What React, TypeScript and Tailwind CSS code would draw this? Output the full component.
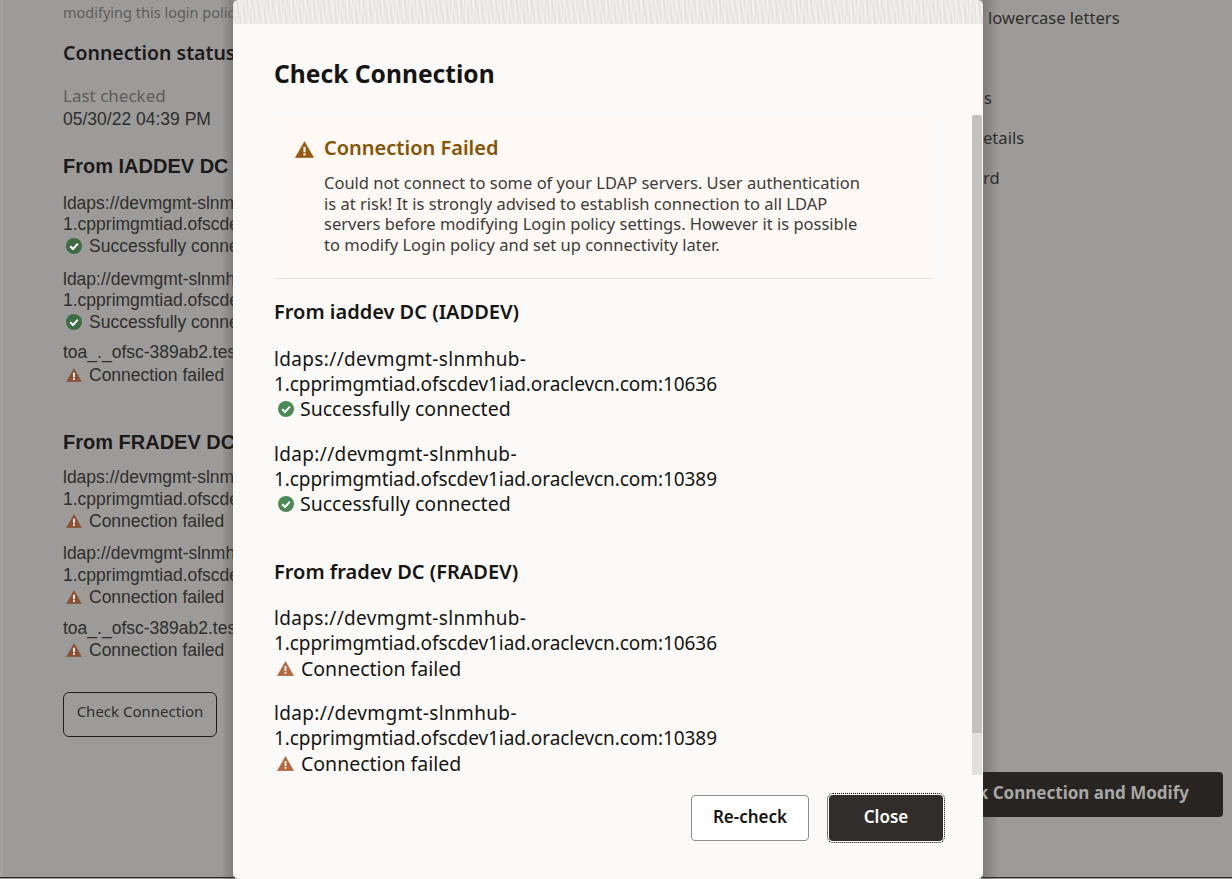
const oracle = "font-['Noto_Sans','Open_Sans',sans-serif]";

function WarnIcon({ className }: { className: string }) {
  return (
    <svg viewBox="0 0 18 16" className={className}>
      <path d="M9 .6 17.6 15.6H.4Z" fill="currentColor" stroke="currentColor" strokeWidth="0.6" strokeLinejoin="round" />
      <rect x="8" y="5.4" width="2" height="5.2" fill="#fff" />
      <rect x="8" y="11.6" width="2" height="2" fill="#fff" />
    </svg>
  );
}

function OkIcon({ className }: { className: string }) {
  return (
    <svg viewBox="0 0 16 16" className={className}>
      <circle cx="8" cy="8" r="8" fill="currentColor" />
      <path d="M4.2 8.3 7 11l4.9-5.4" fill="none" stroke="#fff" strokeWidth="2" />
    </svg>
  );
}

function BgStatus({ failed, text }: { failed?: boolean; text: string }) {
  return (
    <div className="flex h-[22px] items-center whitespace-nowrap pl-[3px] text-[#2f2e2c]">
      {failed ? <WarnIcon className="mr-[7px] h-[14px] w-[16px] shrink-0 text-[#8a5233]" /> : <OkIcon className="mr-[7px] h-[16px] w-[16px] shrink-0 text-[#3c6b44]" />}
      {text}
    </div>
  );
}

function BgUrl({ first, second, failed, className }: { first: string; second: string; failed?: boolean; className: string }) {
  return (
    <div className={className}>
      <div className="h-[22px] whitespace-nowrap leading-[22px] text-[#2f2e2c]">{first}</div>
      {/* the failed blocks sit one pixel looser than the connected ones */}
      <div className={failed ? "h-[22px] whitespace-nowrap pt-[1px] leading-[21px] text-[#2f2e2c]" : "h-[21px] whitespace-nowrap leading-[21px] text-[#2f2e2c]"}>{second}</div>
      <BgStatus failed={failed} text={failed ? "Connection failed" : "Successfully connected"} />
    </div>
  );
}

function ModalUrl({ first, failed, className }: { first: string; failed?: boolean; className: string }) {
  return (
    <div className={className}>
      <div className="text-[19px] leading-[25px] tracking-[0.35px]">{first}</div>
      <div className="text-[19px] leading-[25px] tracking-[-0.07px]">1.cpprimgmtiad.ofscdev1iad.oraclevcn.com:{first.startsWith("ldaps") ? "10636" : "10389"}</div>
      <div className={failed ? "flex h-[25px] items-center pl-[3px] text-[19.5px]" : "flex h-[25px] items-center pb-[2px] pl-[3px] text-[19.5px]"}>
        {failed ? <WarnIcon className="mr-[7px] h-[15px] w-[17px] text-[#b5683f]" /> : <OkIcon className="ml-[1px] mr-[6px] h-[16px] w-[16px] text-[#4c8a55]" />}
        {failed ? "Connection failed" : "Successfully connected"}
      </div>
    </div>
  );
}

export default function App() {
  return (
    <div className="relative h-[879px] w-[1232px] overflow-hidden bg-[#9c9b99]">
      <div className="absolute inset-y-0 left-[221px] w-[12px] bg-gradient-to-r from-transparent to-[#7f7e7c]" />
      <div className="absolute inset-y-0 left-[983px] w-[16px] bg-gradient-to-r from-[#7f7e7c] to-transparent" />

      <div className="relative flex h-[878px] border-b border-[#2a2a2a]">
        <div className="w-[3px] shrink-0 bg-[#a3a3a1]" />
        <div className="w-[200px] shrink-0 pl-[60px] font-['Liberation_Sans',sans-serif] text-[17.5px]">
          <div className={`${oracle} mt-[3px] h-[18px] whitespace-nowrap text-[14.5px] leading-[18px] text-[#5e5d5b]`}>modifying this login policy</div>
          <div className={`${oracle} mt-[19px] h-[26px] whitespace-nowrap text-[19.5px] font-semibold leading-[26px] text-[#1b1a19]`}>Connection status</div>
          <div className={`${oracle} mt-[19px] h-[22px] whitespace-nowrap text-[17px] leading-[22px] text-[#5e5d5b]`}>Last checked</div>
          <div className="h-[24px] whitespace-nowrap leading-[24px] text-[#2f2e2c]">05/30/22 04:39 PM</div>
          <div className="mt-[22px] h-[26px] whitespace-nowrap text-[20px] font-bold leading-[26px] text-[#1b1a19]">From IADDEV DC (IADDEV)</div>
          <BgUrl className="mt-[13px]" first="ldaps://devmgmt-slnmhub-" second="1.cpprimgmtiad.ofscdev1iad.oraclevcn.com:10636" />
          <BgUrl className="mt-[11px]" first="ldap://devmgmt-slnmhub-" second="1.cpprimgmtiad.ofscdev1iad.oraclevcn.com:10389" />
          <div className="mt-[8px] h-[22px] whitespace-nowrap leading-[22px] text-[#2f2e2c]">toa_._ofsc-389ab2.test.com:636</div>
          <div className="mt-[1px]"><BgStatus failed text="Connection failed" /></div>
          <div className="mt-[43px] h-[26px] whitespace-nowrap text-[20px] font-bold leading-[26px] text-[#1b1a19]">From FRADEV DC (FRADEV)</div>
          <BgUrl failed className="mt-[11px]" first="ldaps://devmgmt-slnmhub-" second="1.cpprimgmtiad.ofscdev1iad.oraclevcn.com:10636" />
          <BgUrl failed className="mt-[10px]" first="ldap://devmgmt-slnmhub-" second="1.cpprimgmtiad.ofscdev1iad.oraclevcn.com:10389" />
          <div className="mt-[9px] h-[22px] whitespace-nowrap leading-[22px] text-[#2f2e2c]">toa_._ofsc-389ab2.test.com:636</div>
          <BgStatus failed text="Connection failed" />
          <button className={`${oracle} mt-[31px] h-[45px] w-[154px] rounded-[6px] border border-[#1f1e1d] pb-[6px] text-[15px] text-[#2f2e2c]`}>Check Connection</button>
        </div>
        <div className="flex-1" />
        <div className={`${oracle} flex w-[249px] shrink-0 flex-col pr-[9px] text-[16.6px] text-[#2f2e2c]`}>
          <div className="mt-[5px] h-[26px] whitespace-nowrap pl-[5px] leading-[26px]">lowercase letters</div>
          <div className="mt-[54px] h-[26px] whitespace-nowrap pl-[1px] leading-[26px]">s</div>
          <div className="mt-[14px] h-[26px] whitespace-nowrap leading-[26px]">etails</div>
          <div className="mt-[14px] h-[26px] whitespace-nowrap leading-[26px]">rd</div>
          <button className="mt-auto mb-[60px] -ml-[40px] flex h-[45px] items-center justify-end rounded-[4px] bg-[#272422] pb-[3px] pr-[34px] text-[17px] font-bold whitespace-nowrap text-[#a8a7a5]">Check Connection and Modify</button>
        </div>
      </div>

      <div className={`${oracle} absolute inset-y-0 left-[233px] flex w-[750px] flex-col overflow-hidden rounded-[6px] bg-[#fbfaf8] text-[#161513]`}>
        <div className="h-[24px] shrink-0 bg-[repeating-linear-gradient(80deg,#ffffff55_0px,#00000008_3px,#ffffff33_5px),repeating-linear-gradient(90deg,#e3e2e0_0px,#f4f3f1_2px,#e6e5e3_4px,#efeeec_7px)]" />
        <div className="flex h-[91px] shrink-0 items-start pl-[41px] pt-[32px]">
          <h1 className="text-[24.6px] font-bold leading-[36px]">Check Connection</h1>
        </div>
        <div className="relative h-[660px] shrink-0 overflow-hidden">
          <div className="absolute right-[1px] top-0 h-full w-[10px] bg-[#e0e0de]">
            <div className="h-[618px] rounded-t-[3px] bg-[#c2c2c0]" />
          </div>
          <div className="w-[658px] translate-x-[41px]">
            <div className="flex h-[164px] border-b border-[#e6dfd8] bg-[#fef9f4] pl-[21px] pt-[19px]">
              <WarnIcon className="mt-[7px] h-[17px] w-[19px] shrink-0 text-[#97590f]" />
              <div className="ml-[10px] w-[540px]">
                <div className="text-[20px] font-semibold leading-[27px] text-[#8a5200]">Connection Failed</div>
                <p className="mt-[12px] text-[16.5px] leading-[20.5px] text-[#3d3c3a]">Could not connect to some of your LDAP servers. User authentication is at risk! It is strongly advised to establish connection to all LDAP servers before modifying Login policy settings. However it is possible to modify Login policy and set up connectivity later.</p>
              </div>
            </div>
            <h2 className="mt-[19px] text-[20px] font-semibold leading-[27px]">From iaddev DC (IADDEV)</h2>
            <ModalUrl className="mt-[22px]" first="ldaps://devmgmt-slnmhub-" />
            <ModalUrl className="mt-[20px]" first="ldap://devmgmt-slnmhub-" />
            <h2 className="mt-[41px] text-[20px] font-semibold leading-[27px]">From fradev DC (FRADEV)</h2>
            <ModalUrl failed className="mt-[21px]" first="ldaps://devmgmt-slnmhub-" />
            <ModalUrl failed className="mt-[20px]" first="ldap://devmgmt-slnmhub-" />
          </div>
        </div>
        <div className="flex flex-1 items-start justify-end gap-[20px] pr-[40px] pt-[20px]">
          <button className="h-[46px] w-[118px] rounded-[4px] border border-[#8f8e8c] bg-white pb-[3px] text-[17px] font-semibold">Re-check</button>
          <button className="h-[46px] w-[114px] rounded-[4px] bg-[#312d2a] pb-[3px] text-[17px] font-semibold text-white outline-1 outline-offset-[1px] outline-black outline-dotted">Close</button>
        </div>
      </div>
    </div>
  );
}
